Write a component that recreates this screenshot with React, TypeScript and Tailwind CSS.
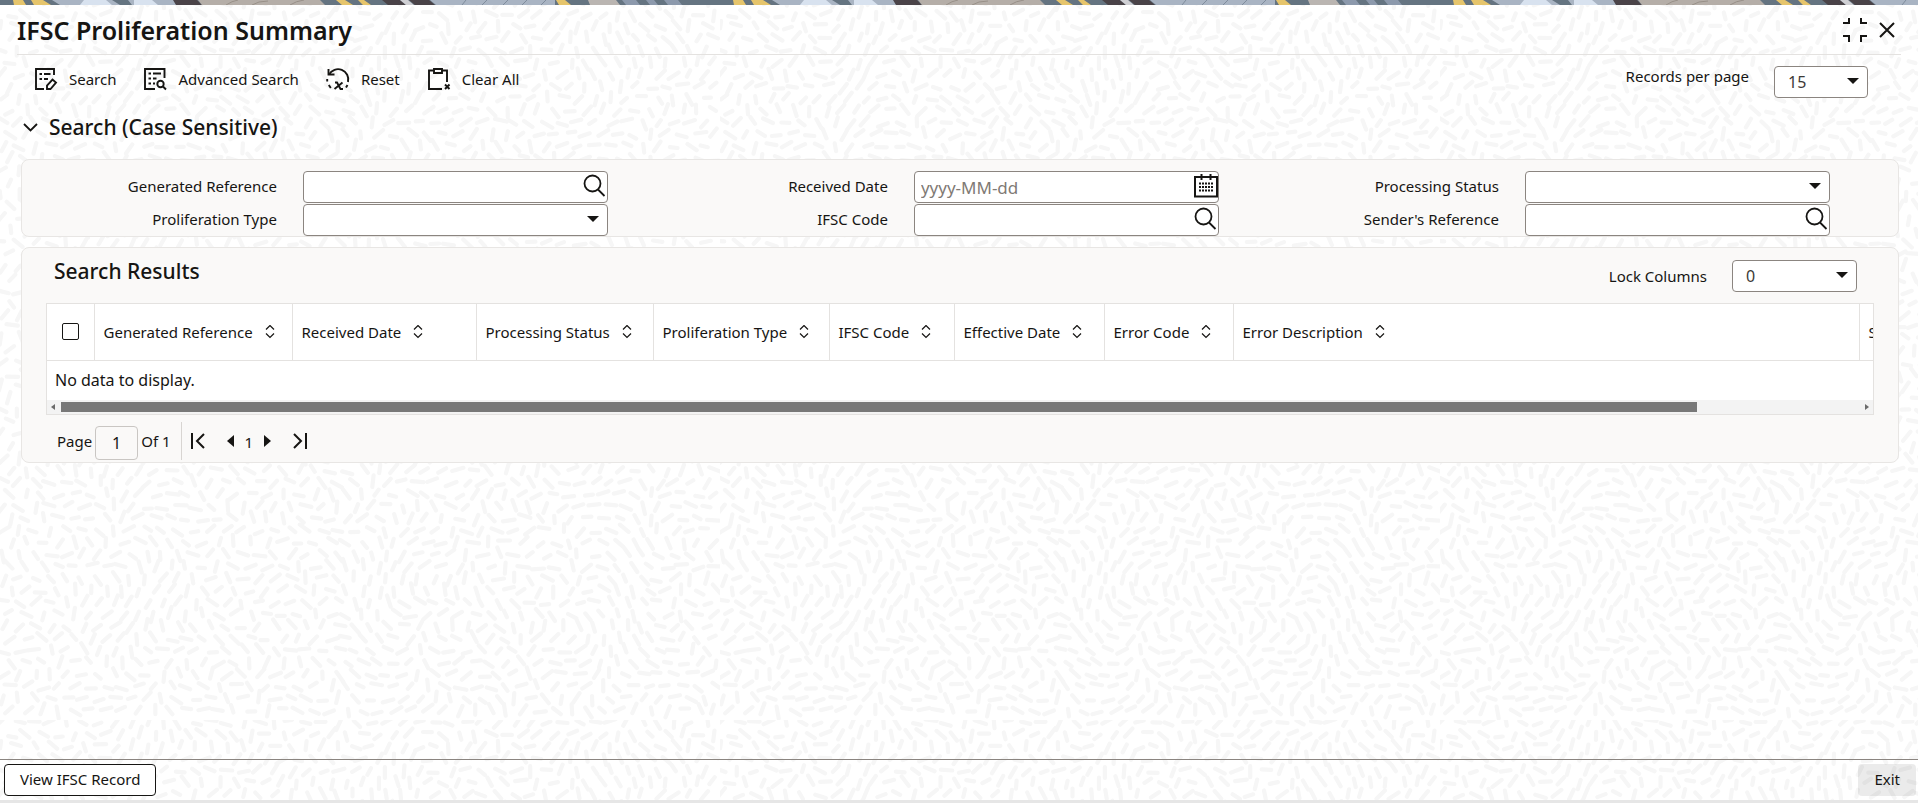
import { useState, type ReactNode } from 'react';

type FieldKind = 'lookup' | 'select' | 'date';

interface Field {
  id: string;
  label: string;
  kind: FieldKind;
}

const fields: Field[] = [
  { id: 'generated-reference', label: 'Generated Reference', kind: 'lookup' },
  { id: 'received-date', label: 'Received Date', kind: 'date' },
  { id: 'processing-status', label: 'Processing Status', kind: 'select' },
  { id: 'proliferation-type', label: 'Proliferation Type', kind: 'select' },
  { id: 'ifsc-code', label: 'IFSC Code', kind: 'lookup' },
  { id: 'senders-reference', label: "Sender's Reference", kind: 'lookup' },
];

const columns = [
  { label: 'Generated Reference', width: 'w-[198px]' },
  { label: 'Received Date', width: 'w-[184px]' },
  { label: 'Processing Status', width: 'w-[177px]' },
  { label: 'Proliferation Type', width: 'w-[176px]' },
  { label: 'IFSC Code', width: 'w-[125px]' },
  { label: 'Effective Date', width: 'w-[150px]' },
  { label: 'Error Code', width: 'w-[129px]' },
  { label: 'Error Description', width: 'w-[626px]' },
  { label: "Sender's Reference", width: 'w-[220px]' },
];

// Short strokes that follow a smooth, tileable direction field
const TILE = 720;

function buildStrokes() {
  let seed = 11;
  const rand = () => {
    seed = (seed * 16807) % 2147483647;
    return seed / 2147483647;
  };
  const k = (2 * Math.PI) / TILE;
  const parts: string[] = [];
  for (let row = 0; row < 60; row++) {
    for (let col = 0; col < 45; col++) {
      const x = col * 16 + (row % 2) * 8 + rand() * 5;
      const y = row * 12 + rand() * 5;
      const angle =
        1.6 * Math.sin(k * (3 * x + 2 * y)) +
        1.5 * Math.cos(k * (4 * y - 2 * x)) +
        1.1 * Math.sin(k * (5 * x - 4 * y) + 1) +
        (rand() - 0.5) * 0.3;
      const half = 3.5 + rand() * 2.5;
      const dx = Math.cos(angle) * half;
      const dy = Math.sin(angle) * half;
      parts.push(
        `M${(x - dx).toFixed(1)} ${(y - dy).toFixed(1)}L${(x + dx).toFixed(1)} ${(y + dy).toFixed(1)}`
      );
    }
  }
  return parts.join('');
}

const strokes = buildStrokes();

function Backdrop() {
  return (
    <svg className="absolute inset-0 w-full h-full" aria-hidden="true">
      <defs>
        <pattern id="strokes" width={TILE} height={TILE} patternUnits="userSpaceOnUse">
          <path d={strokes} stroke="#f6f6f6" strokeWidth="4.2" strokeLinecap="round" />
        </pattern>
      </defs>
      <rect width="100%" height="100%" fill="url(#strokes)" />
    </svg>
  );
}

function TopStrip() {
  return (
    <svg className="block w-full h-[5px]" aria-hidden="true">
      <defs>
        <pattern id="strip" width="720" height="5" patternUnits="userSpaceOnUse">
          <rect width="720" height="5" fill="#657481" />
          <path d="M13 0h10l3 5H14zM31 0h12l8 5H34z" fill="#e6c56c" />
          <path d="M52 0h60l8 5H60zM128 0h50v5h-46z" fill="#a9b4c3" />
          <path d="M84 0h22l6 5H80zM134 0h18l6 5h-24z" fill="#d8e2ef" />
          <path d="M173 0h24l5 5h-26zM382 0h18l6 5h-18zM409 0h20l6 5h-20z" fill="#4a4348" />
          <path d="M198 0h122l5 5H202z" fill="#b5aea8" />
          <path d="M226 5q6-4 12-5M252 5q6-4 16-4M290 5q6-4 14-5" stroke="#989088" fill="none" />
          <path d="M336 0h9l8 5h-11zM358 0h6l7 5h-8z" fill="#e6c56c" />
          <path d="M400 0h8l6 5h-8z" fill="#d0d0d4" />
          <path d="M430 0h125v5H436z" fill="#a9b4c3" />
          <path d="M462 5l4-5M482 5l5-5M503 5l5-5M522 5l5-5M541 5l5-5" stroke="#7f8c9c" fill="none" />
          <path d="M556 0h9l6 5h-12z" fill="#e6c56c" />
          <path d="M588 0h28l4 5h-30z" fill="#bab5b1" />
          <path d="M622 0h14l4 5h-14zM646 0h8l4 5h-8zM664 0h14l4 5h-14z" fill="#8c99ac" />
        </pattern>
      </defs>
      <rect width="100%" height="5" fill="url(#strip)" />
    </svg>
  );
}

function SearchEditIcon() {
  return (
    <svg width="24" height="24" viewBox="0 0 24 24" fill="none" stroke="#161513" strokeWidth="1.9">
      <path d="M20 8V2H2v20h8" />
      <path d="M5.500 7H8M10 7h6.500M5.500 12H8M10 12h4" />
      <path d="M13 22v-3.500l5.500-6 3.500 3-5.500 6.500z" />
    </svg>
  );
}

function AdvancedSearchIcon() {
  return (
    <svg width="24" height="24" viewBox="0 0 24 24" fill="none" stroke="#161513" strokeWidth="1.9">
      <path d="M21.500 11V2H2v20h10" />
      <path d="M5.500 6.500H8M10 6.500h8M5.500 11.500H8M10 11.500h3.500M5.500 16.500H8M10 16.500h2" />
      <circle cx="17.500" cy="17" r="3.200" />
      <path d="M20 19.500l3 3" />
    </svg>
  );
}

function ResetIcon() {
  return (
    <svg width="24" height="24" viewBox="0 0 24 24" fill="none" stroke="#161513" strokeWidth="1.9">
      <path d="M2.500 2v5.500h6" />
      <path d="M3 7.500A10.300 10.300 0 0 1 22 15" />
      <path d="M1.200 12v2.500M2.800 18l2 3M21.500 18l-1.500 2.500" />
      <path d="M9 15.500h2l3.500 6.500H17M16.500 15.500L8.500 22" />
    </svg>
  );
}

function ClearAllIcon() {
  return (
    <svg width="24" height="24" viewBox="0 0 24 24" fill="none" stroke="#161513" strokeWidth="1.9">
      <path d="M7 3.500H2V22h13M15 3.500h5V15" />
      <path d="M7 2h8v4H7z" />
      <path d="M18 17.500l4.500 4.500M22.500 17.500L18 22" />
    </svg>
  );
}

function MagnifierIcon() {
  return (
    <svg width="24" height="24" viewBox="0 0 24 24" fill="none" stroke="#161513" strokeWidth="1.8">
      <circle cx="9.500" cy="9.500" r="8" />
      <path d="M15 15.500l6.500 6.500" />
    </svg>
  );
}

function CalendarIcon() {
  return (
    <svg width="24" height="24" viewBox="0 0 24 24" fill="none" stroke="#161513">
      <path d="M1 3h22v19.500H1z" strokeWidth="2" />
      <path d="M7.500 0v6M16.500 0v6" strokeWidth="2" />
      <path d="M5 9.500h14M5 13h14M5 16.500h14" strokeWidth="2" strokeDasharray="2 1" />
    </svg>
  );
}

function Caret() {
  return (
    <svg width="12" height="6" viewBox="0 0 12 6" className="pointer-events-none">
      <path d="M0 0h12L6 6z" fill="#161513" />
    </svg>
  );
}

function SortIcon() {
  return (
    <svg width="10" height="14" viewBox="0 0 10 14" fill="none" stroke="#161513" strokeWidth="1.2">
      <path d="M1 4.500l4-4 4 4M1 8.500l4 4 4-4" />
    </svg>
  );
}

const boxClass = 'h-8 w-full rounded border border-[#8b8580] bg-white text-[#3d3a37]';

function SelectBox({ id, value }: { id: string; value?: string }) {
  return (
    <div className="relative w-full">
      <select id={id} className={`${boxClass} appearance-none pl-[13px] text-base`}>
        <option>{value ?? ''}</option>
      </select>
      <span className="absolute right-[9px] top-[12px] pointer-events-none">
        <Caret />
      </span>
    </div>
  );
}

function FieldInput({ field }: { field: Field }) {
  if (field.kind === 'select') return <SelectBox id={field.id} />;
  return (
    <div className="relative w-full">
      <input
        id={field.id}
        type="text"
        placeholder={field.kind === 'date' ? 'yyyy-MM-dd' : undefined}
        className={`${boxClass} pl-1.5 pr-8 text-[17px] placeholder:text-[#7f7a75]`}
      />
      <button
        type="button"
        aria-label={field.kind === 'date' ? 'Select date' : 'Look up'}
        className="absolute right-px top-[3px]"
      >
        {field.kind === 'date' ? <CalendarIcon /> : <MagnifierIcon />}
      </button>
    </div>
  );
}

function ToolButton({ icon, label }: { icon: ReactNode; label: string }) {
  return (
    <button type="button" className="flex items-center gap-[11px] text-[15px]">
      {icon}
      {label}
    </button>
  );
}

export default function App() {
  const [expanded, setExpanded] = useState(true);
  const [page, setPage] = useState('1');

  return (
    <div className="relative min-h-screen flex flex-col bg-white font-['Noto_Sans',sans-serif] text-[15px] leading-5 text-[#161513]">
      <div className="relative flex-1 flex flex-col border-b-[3px] border-[#e6e6e6] mb-[6px]">
        <Backdrop />
        <div className="relative flex-1 flex flex-col">
          <TopStrip />

          <header className="mx-[17px] h-[50px] flex items-center justify-between border-b border-[#e4e2e0] pr-1.5">
            <h1 className="text-[25px] font-semibold leading-8">IFSC Proliferation Summary</h1>
            <div className="flex items-center gap-3">
              <button type="button" aria-label="Restore size">
                <svg width="24" height="24" viewBox="0 0 24 24" fill="none" stroke="#161513" strokeWidth="2">
                  <path d="M0 5h6V0M24 5h-6V0M0 18h6v6M24 18h-6v6" />
                </svg>
              </button>
              <button type="button" aria-label="Close">
                <svg width="16" height="16" viewBox="0 0 16 16" fill="none" stroke="#161513" strokeWidth="2">
                  <path d="M1 1l14 14M15 1L1 15" />
                </svg>
              </button>
            </div>
          </header>

          <div className="flex items-start justify-between pl-[34px] pr-[50px]">
            <div className="flex items-center gap-[27px] pt-3">
              <ToolButton icon={<SearchEditIcon />} label="Search" />
              <ToolButton icon={<AdvancedSearchIcon />} label="Advanced Search" />
              <ToolButton icon={<ResetIcon />} label="Reset" />
              <ToolButton icon={<ClearAllIcon />} label="Clear All" />
            </div>
            <div className="flex items-start gap-[25px] pt-[11px]">
              <label htmlFor="records-per-page">Records per page</label>
              <div className="w-[94px]">
                <SelectBox id="records-per-page" value="15" />
              </div>
            </div>
          </div>

          <button
            type="button"
            aria-expanded={expanded}
            onClick={() => setExpanded(!expanded)}
            className="self-start ml-[23px] mt-[15px] flex items-center gap-[11px] text-[21px] font-medium leading-7"
          >
            <svg width="15" height="9" viewBox="0 0 15 9" fill="none" stroke="#161513" strokeWidth="1.8">
              <path d="M1 1l6.500 6.500L14 1" />
            </svg>
            Search (Case Sensitive)
          </button>

          {expanded && (
            <section className="ml-[21px] mr-[19px] mt-[18px] grid grid-cols-3 gap-y-px rounded-lg border border-[#e8e6e4] bg-[#faf9f8] pl-[21px] pr-[22px] pt-[11px]">
              {fields.map((field) => (
                <div key={field.id} className="flex items-center pr-[46px]">
                  <label htmlFor={field.id} className="flex-1 pr-[26px] pb-0.5 text-right">
                    {field.label}
                  </label>
                  <div className="w-[54%]">
                    <FieldInput field={field} />
                  </div>
                </div>
              ))}
            </section>
          )}

          <section className="ml-[21px] mr-[19px] mt-[10px] rounded-lg border border-[#e8e6e4] bg-[#faf9f8] px-6">
            <div className="flex items-start justify-between pt-[11px] pb-[11px] pl-2 pr-[17px]">
              <h2 className="text-[21px] font-medium leading-6">Search Results</h2>
              <div className="flex items-center gap-[25px] pt-px">
                <label htmlFor="lock-columns">Lock Columns</label>
                <div className="w-[125px]">
                  <SelectBox id="lock-columns" value="0" />
                </div>
              </div>
            </div>

            <div className="border border-[#e4e2e0] bg-white">
              <div className="overflow-hidden">
                <table className="w-max table-fixed border-collapse">
                  <thead>
                    <tr className="h-14 border-b border-[#e4e2e0]">
                      <th className="w-[47px] border-r border-[#e4e2e0]">
                        <input
                          type="checkbox"
                          aria-label="Select all rows"
                          className="block mx-auto size-[17px] appearance-none rounded-xs border border-[#161513] bg-white"
                        />
                      </th>
                      {columns.map((column) => (
                        <th
                          key={column.label}
                          className={`${column.width} border-r border-[#e4e2e0] pl-[9px] text-left font-normal`}
                        >
                          <button type="button" className="flex items-center gap-3 whitespace-nowrap">
                            {column.label}
                            <SortIcon />
                          </button>
                        </th>
                      ))}
                    </tr>
                  </thead>
                  <tbody>
                    <tr className="h-10">
                      <td colSpan={columns.length + 1} className="pl-2 text-base">
                        No data to display.
                      </td>
                    </tr>
                  </tbody>
                </table>
              </div>
              <div className="flex h-[14px] items-center bg-[#f3f3f3] px-1" aria-hidden="true">
                <svg width="4" height="6" viewBox="0 0 4 6">
                  <path d="M4 0v6L0 3z" fill="#6b6b6b" />
                </svg>
                <div className="mx-1.5 flex-1">
                  <div className="h-[10px] w-[91%] bg-[#787878]" />
                </div>
                <svg width="4" height="6" viewBox="0 0 4 6">
                  <path d="M0 0v6l4-3z" fill="#6b6b6b" />
                </svg>
              </div>
            </div>

            <nav className="flex h-[47px] items-center pl-[11px] pt-1" aria-label="Pagination">
              <label htmlFor="page">Page</label>
              <input
                id="page"
                type="text"
                value={page}
                onChange={(e) => setPage(e.target.value)}
                className="mx-[3px] mt-1 h-[34px] w-[43px] rounded border border-[#c9c6c3] bg-transparent text-center text-base"
              />
              <span>Of 1</span>
              <div className="ml-[10px] h-[38px] border-l border-[#d8d5d2]" />
              <button type="button" aria-label="First page" className="ml-[9px]">
                <svg width="14" height="16" viewBox="0 0 14 16" fill="none" stroke="#161513" strokeWidth="2">
                  <path d="M1 0v16M13 1L6 8l7 7" />
                </svg>
              </button>
              <button type="button" aria-label="Previous page" className="ml-[22px]">
                <svg width="7" height="12" viewBox="0 0 7 12">
                  <path d="M7 0v12L0 6z" fill="#161513" />
                </svg>
              </button>
              <span className="mx-[11px] mt-0.5">1</span>
              <button type="button" aria-label="Next page">
                <svg width="7" height="12" viewBox="0 0 7 12">
                  <path d="M0 0v12l7-6z" fill="#161513" />
                </svg>
              </button>
              <button type="button" aria-label="Last page" className="ml-[22px]">
                <svg width="14" height="16" viewBox="0 0 14 16" fill="none" stroke="#161513" strokeWidth="2">
                  <path d="M13 0v16M1 1l7 7-7 7" />
                </svg>
              </button>
            </nav>
          </section>

          <footer className="mt-auto flex items-center justify-between border-t border-[#8b8580] pl-1 pr-0.5 py-1">
            <button type="button" className="h-8 rounded border border-[#161513] bg-white px-[15px] pb-0.5">
              View IFSC Record
            </button>
            <button type="button" className="h-8 rounded bg-black/8 px-4 pb-0.5">
              Exit
            </button>
          </footer>
        </div>
      </div>
    </div>
  );
}
